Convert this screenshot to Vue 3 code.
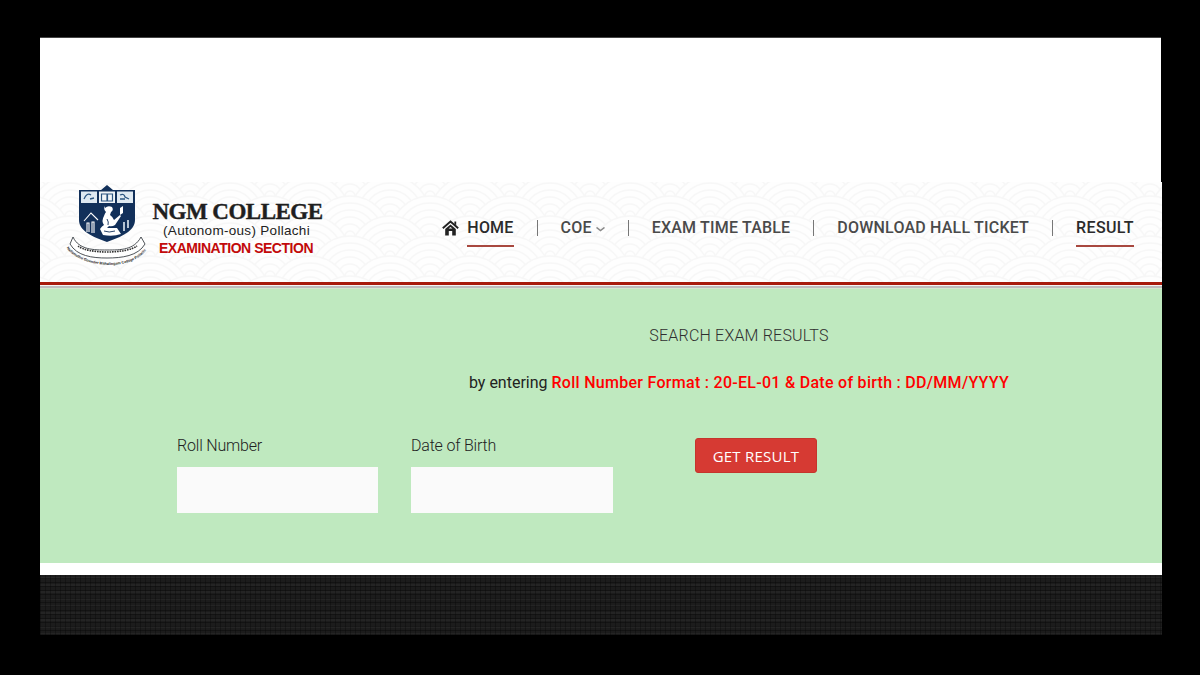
<script setup>
const radii = [40, 33, 26, 19, 12, 5]
const rows = [
  [[40, 0]],
  [[0, 20], [80, 20]],
  [[40, 40]],
  [[0, 60], [80, 60]],
  [[40, 80]]
]
const scales = rows.flat()
const navItems = [
  { label: 'COE', caret: true },
  { label: 'EXAM TIME TABLE' },
  { label: 'DOWNLOAD HALL TICKET' }
]
</script>

<template>
  <div class="page">
    <div class="top-space"></div>
    <header class="header">
      <svg class="pattern" width="100%" height="100%" aria-hidden="true">
        <defs>
          <pattern id="scales" width="80" height="40" patternUnits="userSpaceOnUse" x="-10" y="-6">
            <g v-for="(s, i) in scales" :key="i">
              <circle v-for="r in radii" :key="r" :cx="s[0]" :cy="s[1]" :r="r" fill="#fefefe" stroke="#f7f7f7" stroke-width="1.4" />
            </g>
          </pattern>
        </defs>
        <rect width="100%" height="100%" fill="url(#scales)" />
      </svg>
      <div class="brand">
        <svg class="crest" viewBox="0 0 90 85" width="90" height="85" aria-hidden="true">
          <path d="M15 6 H37 L43 1 L49 6 H71 V36 C71 47 57 53 43 58 C29 53 15 47 15 36 Z" fill="#12305a" />
          <rect x="17" y="7.5" width="16" height="11.5" fill="#dfe9f1" />
          <rect x="35" y="7.5" width="16" height="11.5" fill="#f1f5f8" />
          <rect x="53" y="7.5" width="16" height="11.5" fill="#dfe9f1" />
          <path d="M20 15 q3 -7 7 -4 M26 15 l4 -1 M56 11 q4 -2 5 2 l4 2 M56 15 h5" fill="none" stroke="#2c5580" stroke-width="1.3" />
          <path d="M37.5 10 h5.5 v7 h-5.5 Z M43.5 10 h5 v7 h-5 Z" fill="none" stroke="#2c5580" stroke-width="1.2" />
          <path d="M41 24 q3 -3 7 -1 q2 3 -1 5 l-1 3 q3 2 4 5 l6 -5 l1 1 -6 9 q-3 2 -6 1 l-2 2 h10 l4 6 q-8 3 -18 1 l-3 -6 q2 -3 4 -4 q-3 -4 0 -9 q1 -3 2 -4 q-3 -3 -1 -6 Z" fill="#fff" />
          <path d="M56 24 l3 -2 v7 l-3 2 Z" fill="#fff" />
          <path d="M43 35 q2 3 1 6 M40 47 q5 2 11 0" fill="none" stroke="#12305a" stroke-width="0.9" />
          <path d="M20 37 l7 -8 l7 7 M23 48 v-9 h2 v9 M28 49 v-11 h2 v11" fill="none" stroke="#fff" stroke-width="1.1" />
          <path d="M60 38 v9 M64 36 v8" stroke="#dfe9f1" stroke-width="1.6" fill="none" />
          <path d="M9 53 C15 66 30 66 43 66 C57 66 70 66 77 53 L81 60 C74 72 58 74 43 74 C28 74 13 72 6 60 Z" fill="#fff" stroke="#3a3f45" stroke-width="0.9" />
          <path d="M14 62 C24 70 62 70 73 62" fill="none" stroke="#333" stroke-width="1.6" stroke-dasharray="1.6 0.9" />
          <path id="arc" d="M2 63 C14 83 69 91 85 62" fill="none" />
          <text class="arc-text"><textPath href="#arc" startOffset="1%">Nallamuthu Gounder Mahalingam College Pollachi</textPath></text>
        </svg>
        <div class="brand-text">
          <div class="college">NGM COLLEGE</div>
          <div class="place">(Autonom-ous) Pollachi</div>
          <div class="section">EXAMINATION SECTION</div>
        </div>
      </div>
      <nav class="nav">
        <svg class="home-icon" viewBox="0 0 17 16" width="17" height="16" aria-hidden="true">
          <path d="M0.8 8.2 L8.5 1.5 L16.2 8.2" fill="none" stroke="#222" stroke-width="1.9" />
          <path d="M12.4 1.6 h1.8 v4 l-1.8 -1.5 Z" fill="#222" />
          <path d="M3.2 9 L8.5 4.6 L13.8 9 V15.6 H10.2 V11 H6.8 V15.6 H3.2 Z" fill="#222" />
          <path d="M6.6 8.6 L8.5 7 L10.4 8.6 Z" fill="#fff" />
        </svg>
        <a class="nav-link active">HOME</a>
        <template v-for="item in navItems" :key="item.label">
          <span class="sep"></span>
          <a class="nav-link">{{ item.label }}<svg v-if="item.caret" class="caret" viewBox="0 0 9 5" width="9" height="5" aria-hidden="true"><path d="M0.5 0.5 L4.5 3.5 L8.5 0.5" fill="none" stroke="#888" stroke-width="1.5" /></svg></a>
        </template>
        <span class="sep"></span>
        <a class="nav-link active">RESULT</a>
      </nav>
    </header>
    <div class="rule"></div>
    <main class="search">
      <h1 class="title">SEARCH EXAM RESULTS</h1>
      <p class="hint">by entering <strong>Roll Number Format : 20-EL-01 &amp; Date of birth : DD/MM/YYYY</strong></p>
      <form class="form" @submit.prevent>
        <label class="field field-roll">
          <span>Roll Number</span>
          <input type="text" />
        </label>
        <label class="field field-dob">
          <span>Date of Birth</span>
          <input type="text" />
        </label>
        <button class="submit" type="submit">GET RESULT</button>
      </form>
    </main>
    <div class="gap"></div>
    <footer class="footer"></footer>
  </div>
</template>

<style>
html, body { margin: 0; background: #000; }
</style>

<style scoped>
.page {
  box-sizing: border-box;
  width: 1122px;
  height: 598px;
  margin: 37px 0 0 40px;
  display: flex;
  flex-direction: column;
  font-family: Roboto, "Liberation Sans", sans-serif;
}
.top-space {
  box-sizing: border-box;
  height: 145px;
  flex: none;
  margin-right: 1px;
  border-top: 1px solid #444;
  background: #fff;
}
.header {
  position: relative;
  height: 100px;
  flex: none;
  display: flex;
  justify-content: space-between;
  overflow: hidden;
  background: #fefefe;
}
.pattern { position: absolute; inset: 0; }
.brand {
  position: relative;
  display: flex;
  margin-left: 24px;
  padding-top: 2px;
}
.crest { flex: none; overflow: visible; }
.arc-text { font: 700 3.7px "Liberation Sans", sans-serif; fill: #222; }
.brand-text {
  margin-left: -2px;
  padding-top: 17px;
  width: 171px;
  text-align: center;
}
.college {
  font-family: "Liberation Serif", serif;
  font-weight: 700;
  font-size: 23px;
  line-height: 22px;
  letter-spacing: -0.5px;
  -webkit-text-stroke: 0.4px #1f1f1f;
  color: #1f1f1f;
  white-space: nowrap;
}
.place {
  font: 13.5px/15px "Liberation Sans", sans-serif;
  letter-spacing: 0.3px;
  color: #222;
  margin-left: -2px;
}
.section {
  font: 700 14px/16px "Liberation Sans", sans-serif;
  letter-spacing: -0.47px;
  color: #c20a0a;
  margin-top: 2px;
  margin-left: -3px;
  white-space: nowrap;
}
.nav {
  position: relative;
  display: flex;
  align-items: flex-start;
  padding: 34px 28px 0 0;
}
.home-icon { margin: 4px 8px 0 0; flex: none; }
.nav-link {
  font-size: 16px;
  font-weight: 500;
  line-height: 24px;
  letter-spacing: 0.2px;
  color: #4a4a4a;
  height: 29px;
  white-space: nowrap;
  display: block;
}
.nav-link.active {
  color: #2b2b2b;
  border-bottom: 2px solid #a8483f;
}
.nav-link:last-child { letter-spacing: 0.37px; }
.caret { margin-left: 4px; vertical-align: 1px; }
.sep {
  width: 1px;
  height: 16px;
  margin: 4px 23px 0;
  background: #777;
  flex: none;
}
.rule {
  height: 7px;
  flex: none;
  background: linear-gradient(#a81a0c 0 3px, #f4f4f4 3px 4px, #bdbdbd 4px 6px, #d5e6cf 6px);
}
.search {
  height: 274px;
  flex: none;
  background: #bfe9bf;
  color: #333;
  display: flex;
  flex-direction: column;
}
.title {
  margin: 37px 0 0;
  padding-left: 276px;
  text-align: center;
  font-size: 16px;
  font-weight: 300;
  line-height: 20px;
  letter-spacing: 0.2px;
  color: #2f2f2f;
}
.hint {
  margin: 27px 0 0;
  padding-left: 276px;
  text-align: center;
  font-size: 16px;
  line-height: 20px;
  color: #222;
}
.hint strong { color: #f00; font-weight: 500; letter-spacing: 0.28px; }
.form {
  display: flex;
  align-items: flex-start;
  margin-top: 43px;
  padding-left: 137px;
}
.field {
  display: flex;
  flex-direction: column;
  font-size: 16px;
  font-weight: 300;
  line-height: 20px;
  letter-spacing: -0.2px;
  color: #222;
}
.field span { height: 31px; }
.field input {
  box-sizing: border-box;
  height: 46px;
  border: 0;
  padding: 0;
  background: #fafafa;
}
.field-roll { width: 201px; margin-right: 33px; }
.field-roll input { width: 201px; }
.field-dob { width: 202px; margin-right: 82px; }
.field-dob input { width: 202px; }
.submit {
  box-sizing: border-box;
  width: 122px;
  height: 35px;
  margin-top: 2px;
  border: 1px solid #c5352c;
  border-radius: 3px;
  background: #d63a33;
  color: #fff;
  font: 500 15px "Open Sans", Roboto, sans-serif;
  letter-spacing: 0.25px;
  padding: 0;
}
.gap { height: 12px; flex: none; background: #fff; }
.footer {
  flex: 1;
  background-color: #1c1c1c;
  background-image:
    repeating-linear-gradient(0deg, rgba(0,0,0,.32) 0 1px, transparent 1px 4px),
    repeating-linear-gradient(90deg, rgba(0,0,0,.28) 0 1px, transparent 1px 5px),
    repeating-linear-gradient(0deg, rgba(255,255,255,.035) 0 2px, transparent 2px 7px);
}
</style>
